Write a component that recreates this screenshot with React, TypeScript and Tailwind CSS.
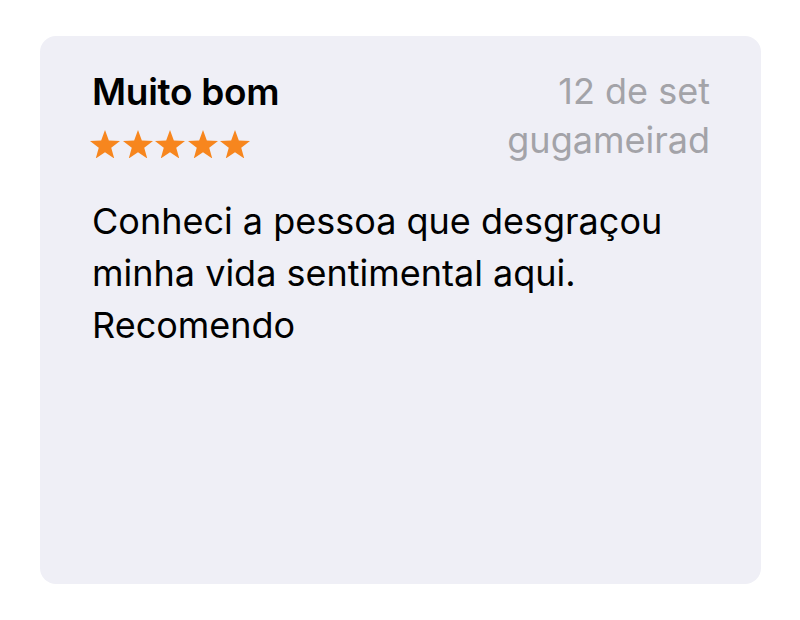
import React from "react";

function Star() {
  return (
    <svg width="30" height="28.5" viewBox="1.3 0.8 21.4 20.3" preserveAspectRatio="none" className="block">
      <path
        d="M12 0.8 L14.75 8.3 L22.7 8.55 L16.45 13.45 L18.6 21.1 L12 16.65 L5.4 21.1 L7.55 13.45 L1.3 8.55 L9.25 8.3 Z"
        fill="#f7861e"
      />
    </svg>
  );
}

export default function App() {
  return (
    <div className="w-[800px] h-[620px] bg-white pt-[36px] pl-[40px]" style={{ fontFamily: "Inter, 'Noto Sans', sans-serif" }}>
      <div className="w-[721px] h-[548px] rounded-[16px] bg-[#efeff6] pl-[52px] pr-[51px] pt-[33.5px]">
        <div className="flex justify-between items-start">
          <div className="flex flex-col">
            <div className="text-[37px] leading-[44px] font-semibold text-black tracking-[-0.3px]">Muito bom</div>
            <div className="flex gap-[2.5px] mt-[16px] -ml-[2px]">
              <Star />
              <Star />
              <Star />
              <Star />
              <Star />
            </div>
          </div>
          <div className="flex flex-col items-end text-[36px] leading-[49px] text-[#a3a3a8] -mt-[3px]">
            <div>12 de set</div>
            <div>gugameirad</div>
          </div>
        </div>
        <div className="mt-[30.5px] text-[36px] leading-[52px] text-black">
          Conheci a pessoa que desgraçou
          <br />
          minha vida sentimental aqui.
          <br />
          Recomendo
        </div>
      </div>
    </div>
  );
}
